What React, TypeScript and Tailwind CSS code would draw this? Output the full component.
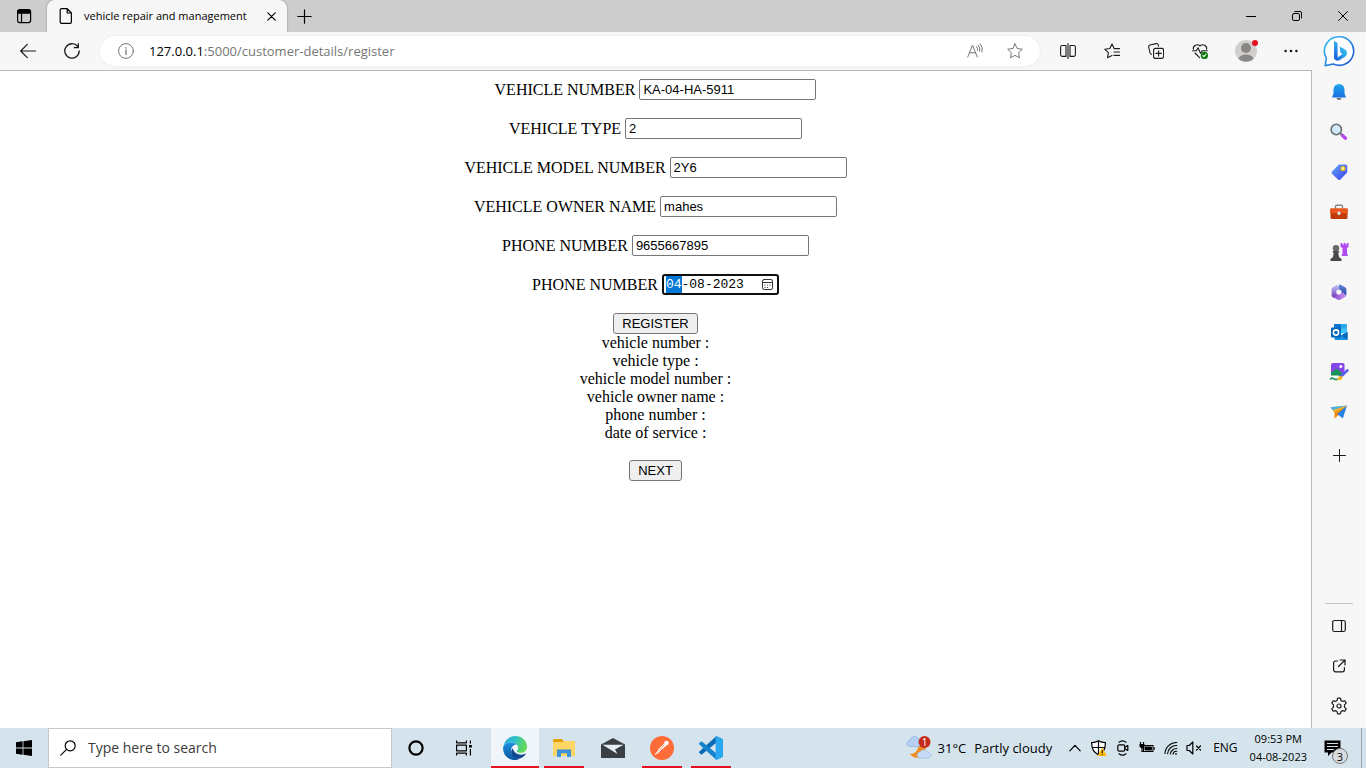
import { useEffect, useRef } from "react";
import type { ReactNode } from "react";

/* ---------- small line icon wrapper ---------- */

function Line({ children, size = 16, w = 1 }: { children: ReactNode; size?: number; w?: number }) {
  return (
    <svg
      width={size}
      height={size}
      viewBox={`0 0 ${size} ${size}`}
      fill="none"
      stroke="currentColor"
      strokeWidth={w}
      strokeLinecap="round"
      strokeLinejoin="round"
      aria-hidden="true"
    >
      {children}
    </svg>
  );
}

function IconButton({ label, className, children }: { label: string; className: string; children: ReactNode }) {
  return (
    <button type="button" aria-label={label} className={`flex shrink-0 items-center justify-center ${className}`}>
      {children}
    </button>
  );
}

/* ---------- window title bar ---------- */

function TabStrip() {
  return (
    <header className="flex h-8 bg-[#cdcdcd] text-black">
      <IconButton label="Tab actions menu" className="w-[47px]">
        <Line w={1.2}>
          <rect x="1.6" y="1.6" width="13" height="13" rx="2" />
          <path d="M2 2.5h12.4v2.6H2z" fill="currentColor" />
          <path d="M5.5 5v9.5" />
        </Line>
      </IconButton>
      <div className="flex w-60 items-center rounded-t-lg bg-[#f7f7f7] pl-3 pr-2 shadow-[0_0_2px_rgba(0,0,0,0.4)]">
        <svg width="14" height="16" viewBox="0 0 14 16" fill="none" stroke="currentColor" strokeWidth="1.2" strokeLinejoin="round" aria-hidden="true">
          <path d="M8.2.7H2.5A1.3 1.3 0 0 0 1.2 2v12a1.3 1.3 0 0 0 1.3 1.3h8.600A1.300 1.300 0 0 0 12.400 14V5zM8.200.7V5h4.200" />
        </svg>
        <span className="ml-[11px] flex-1 whitespace-nowrap text-[11px] leading-4">vehicle repair and management</span>
        <IconButton label="Close tab" className="h-4 w-4">
          <Line size={9} w={1.2}>
            <path d="M.8.8l7.400 7.400M8.200.8L.8 8.200" />
          </Line>
        </IconButton>
      </div>
      <IconButton label="New tab" className="w-[35px]">
        <Line size={15} w={1.2}>
          <path d="M7.5.8v13.4M.8 7.5h13.4" />
        </Line>
      </IconButton>
      <div className="flex-1" />
      <IconButton label="Minimize" className="w-[46px]">
        <Line size={10}>
          <path d="M0 5.5h10" />
        </Line>
      </IconButton>
      <IconButton label="Restore" className="w-[46px]">
        <Line size={10}>
          <rect x=".5" y="2.5" width="7" height="7" rx="1.4" />
          <path d="M2.8.5H8A1.6 1.6 0 0 1 9.6 2v5" />
        </Line>
      </IconButton>
      <IconButton label="Close" className="w-[46px]">
        <Line size={10}>
          <path d="M.5.5l9 9M9.500.5l-9 9" />
        </Line>
      </IconButton>
    </header>
  );
}

/* ---------- address bar ---------- */

function BingLogo() {
  return (
    <svg width="32" height="32" viewBox="0 0 32 32" aria-hidden="true">
      <defs>
        <linearGradient id="bingRing" x1="0" y1="0" x2="1" y2="1">
          <stop offset="0" stopColor="#35c3f3" />
          <stop offset="1" stopColor="#1b4fd0" />
        </linearGradient>
        <linearGradient id="bingStem" x1="0" y1="0" x2="0" y2="1">
          <stop offset="0" stopColor="#35b4f2" />
          <stop offset="1" stopColor="#1b5fe0" />
        </linearGradient>
        <linearGradient id="bingB" x1="0" y1="1" x2="1" y2="0">
          <stop offset="0" stopColor="#1b5fe0" />
          <stop offset="1" stopColor="#36d0ef" />
        </linearGradient>
      </defs>
      <path d="M16 1.7A14.3 14.3 0 1 1 10.4 29l-8.2 1.6 1.2-7.4A14.3 14.3 0 0 1 16 1.7z" fill="#fff" stroke="url(#bingRing)" strokeWidth="1.6" strokeLinejoin="round" />
      <path d="M16.500 11.500l5.200 2.800c2.800 1.700 3 5.300.7 7.200l-6 3.700c-2.500 1.200-5.400-.2-5.400-3.200l3.500.5 5-3.500-2-1.500z" fill="url(#bingB)" />
      <path d="M11 6l2.600 1.200c.7.400 1 .9 1 1.700V22c0 1.500-1.200 2.300-2.300 2-.9-.3-1.300-1-1.300-2z" fill="url(#bingStem)" />
    </svg>
  );
}

function AddressBar() {
  return (
    <nav aria-label="Browser toolbar" className="flex h-[38px] items-center bg-[#f7f7f7] pl-1.5 text-[#1b1b1b]">
      <IconButton label="Back" className="h-8 w-11">
        <Line w={1.2}>
          <path d="M15.5 8H.8M7.3 1.4L.7 8l6.6 6.6" />
        </Line>
      </IconButton>
      <IconButton label="Refresh" className="h-8 w-11">
        <Line w={1.3}>
          <path d="M15.2 8A7.2 7.2 0 1 1 13.6 3.4M14.3.7v4h-4" />
        </Line>
      </IconButton>
      <div className="mx-1.5 flex h-[30px] flex-1 items-center rounded-full bg-white pl-[18px] pr-[17px] text-[#767676] shadow-[0_0_3px_rgba(0,0,0,0.08)]">
        <Line w={1}>
          <circle cx="8" cy="8" r="7.4" />
          <path d="M8 7v4.6M8 4.6v.4" strokeWidth="1.3" />
        </Line>
        <a href="#register" className="ml-[15px] flex-1 whitespace-nowrap text-[13px] leading-5">
          <span className="text-black">127.0.0.1</span>:5000/customer-details/register
        </a>
        <IconButton label="Read aloud" className="mr-6 h-6 w-4">
          <Line>
            <path d="M.7 14L5.500 2.200 10.300 14M2.400 9.800h6.200M9.500 3.600a4 4 0 0 1 1 3.800M11.300 2.200a6 6 0 0 1 1.400 6M13.200.9a8 8 0 0 1 1.800 8" />
          </Line>
        </IconButton>
        <IconButton label="Add to favorites" className="h-6 w-4">
          <Line>
            <path d="M8 .9l2.2 4.6 5.1.7-3.7 3.5.9 5.1L8 12.4l-4.5 2.4.9-5.1L.7 6.2l5.1-.7z" />
          </Line>
        </IconButton>
      </div>
      <IconButton label="Split screen" className="h-8 w-11">
        <Line w={1.1}>
          <path d="M6 2.5H2.2A1.6 1.6 0 0 0 .6 4v7.8a1.6 1.6 0 0 0 1.6 1.6H6zM10 2.5h3.8A1.6 1.6 0 0 1 15.4 4v7.8a1.6 1.6 0 0 1-1.6 1.6H10zM8 .6v14.8" />
        </Line>
      </IconButton>
      <IconButton label="Favorites" className="h-8 w-11">
        <Line w={1.1}>
          <path d="M10.2 5.6L8 .9 5.8 5.5l-5.1.7 3.7 3.5-.9 5.1L8 12.6M10 5.6h5.5M10 9h5.5M10 12.4h5.5" />
        </Line>
      </IconButton>
      <IconButton label="Collections" className="h-8 w-11">
        <Line w={1.1}>
          <rect x="5.6" y="5.4" width="10" height="10" rx="2" />
          <path d="M10.6 7.7v5.4M7.9 10.4h5.4M3.5 11.4A1.8 1.8 0 0 1 2 10L.7 4A1.8 1.8 0 0 1 2 2l6-1.4A1.8 1.8 0 0 1 10.2 2l.4 1.3" />
        </Line>
      </IconButton>
      <IconButton label="Browser essentials" className="h-8 w-11">
        <Line w={1.1}>
          <path d="M1.3 6.2A3.9 3.9 0 0 1 8 3a3.9 3.9 0 0 1 6.7 3.2M.6 7.8h3.8l1.6-3 2.5 5.4L10.3 7.8h5M3 10l4.6 4.6" />
          <circle cx="12.4" cy="12.4" r="3.6" fill="#107c10" stroke="none" />
          <path d="M10.8 12.6l1.1 1 2-2.2" stroke="#fff" />
        </Line>
      </IconButton>
      <IconButton label="Profile" className="h-8 w-12">
        <svg width="24" height="24" viewBox="0 0 24 24" aria-hidden="true">
          <circle cx="12" cy="12" r="11" fill="#d2d0ce" />
          <circle cx="12" cy="9" r="5" fill="#8a8886" />
          <path d="M4.600 20c.8-6 14-6 14.800 0A11 11 0 0 1 4.600 20z" fill="#8a8886" />
          <circle cx="21" cy="4" r="3" fill="#e81123" />
        </svg>
      </IconButton>
      <IconButton label="Settings and more" className="h-8 w-[42px]">
        <svg width="14" height="4" viewBox="0 0 14 4" fill="currentColor" aria-hidden="true">
          <circle cx="1.6" cy="2" r="1.3" />
          <circle cx="7" cy="2" r="1.3" />
          <circle cx="12.4" cy="2" r="1.3" />
        </svg>
      </IconButton>
      <IconButton label="Discover" className="h-8 w-[54px]">
        <BingLogo />
      </IconButton>
    </nav>
  );
}

/* ---------- registration page ---------- */

const fields = [
  { id: "vehicle-number", label: "VEHICLE NUMBER", value: "KA-04-HA-5911" },
  { id: "vehicle-type", label: "VEHICLE TYPE", value: "2" },
  { id: "vehicle-model", label: "VEHICLE MODEL NUMBER", value: "2Y6" },
  { id: "owner-name", label: "VEHICLE OWNER NAME", value: "mahes" },
  { id: "phone-number", label: "PHONE NUMBER", value: "9655667895" },
];

const summary = ["vehicle number :", "vehicle type :", "vehicle model number :", "vehicle owner name :", "phone number :", "date of service :"];

const formButton = "h-[21px] rounded-[3px] border border-[#767676] bg-[#efefef] px-2 font-['Liberation_Sans',Arial,sans-serif] text-[13px] leading-4";

function RegisterPage() {
  const dateRef = useRef<HTMLInputElement>(null);

  useEffect(() => {
    dateRef.current?.focus();
    dateRef.current?.setSelectionRange(0, 2);
  }, []);

  return (
    <main className="flex-1 border-r border-t border-[#b9b9b9] bg-white p-2 font-['Liberation_Serif','Times_New_Roman',serif] text-[16px] leading-[18px] text-black">
      <form className="flex flex-col items-center" onSubmit={(e) => e.preventDefault()}>
        {fields.map((f) => (
          <div key={f.id} className="mb-[18px] flex h-[21px] items-center gap-1">
            <label htmlFor={f.id}>{f.label}</label>
            <input
              id={f.id}
              defaultValue={f.value}
              className="h-[21px] w-[177px] rounded-[2px] border border-[#767676] bg-white px-[3px] font-['Liberation_Sans',Arial,sans-serif] text-[13px] leading-4"
            />
          </div>
        ))}
        <div className="mb-[18px] flex h-[21px] items-center gap-1">
          <label htmlFor="service-date">PHONE NUMBER</label>
          <div className="flex h-[21px] w-[117px] items-center rounded-[3px] border-2 border-[#101010] bg-white pl-0.5 pr-[3px]">
            <input
              id="service-date"
              ref={dateRef}
              defaultValue="04-08-2023"
              className="h-[17px] w-0 flex-1 font-['Liberation_Mono','Courier_New',monospace] text-[13px] leading-[17px] caret-transparent outline-none selection:bg-[#0078d7] selection:text-white"
            />
            <button type="button" aria-label="Open calendar" className="text-[#333]">
              <Line size={13}>
                <rect x="1.5" y="1.5" width="10" height="10" rx="1.6" />
                <path d="M1.5 4.5h10" />
                <path d="M4 7h.1M6.500 7h.1M9 7h.1M4 9.500h.1M6.500 9.500h.1" strokeWidth="1.2" />
              </Line>
            </button>
          </div>
        </div>
        <button type="submit" className={formButton}>
          REGISTER
        </button>
        <div className="mb-[18px] text-center">
          {summary.map((s) => (
            <p key={s}>{s}</p>
          ))}
        </div>
        <button type="button" className={formButton}>
          NEXT
        </button>
      </form>
    </main>
  );
}

/* ---------- browser sidebar ---------- */

function Bell() {
  return (
    <svg width="18" height="18" viewBox="0 0 18 18">
      <defs>
        <linearGradient id="bell" x1="0" y1="0" x2="0" y2="1">
          <stop offset="0" stopColor="#1fa5ee" />
          <stop offset="1" stopColor="#1a6fe0" />
        </linearGradient>
      </defs>
      <path d="M6.5 15h5a2.5 2 0 0 1-5 0z" fill="#707070" />
      <path d="M9 1a5.5 5.5 0 0 1 5.5 5.5v4L16 14.5H2l1.5-4v-4A5.5 5.5 0 0 1 9 1z" fill="url(#bell)" />
    </svg>
  );
}

function Search() {
  return (
    <svg width="18" height="18" viewBox="0 0 18 18">
      <path d="M12.200 12.200l3.300 3" stroke="#b544ee" strokeWidth="3.2" strokeLinecap="round" />
      <path d="M10.2 10.2l1.800 1.800" stroke="#777" strokeWidth="1.8" />
      <circle cx="6.3" cy="6.500" r="5.200" fill="#cfeafb" stroke="#6b6f75" strokeWidth="1.6" />
    </svg>
  );
}

function Tag() {
  return (
    <svg width="18" height="18" viewBox="0 0 18 18">
      <defs>
        <linearGradient id="tag" x1="0" y1="0" x2="1" y2="1">
          <stop offset="0" stopColor="#5fa8fb" />
          <stop offset="1" stopColor="#3f3fee" />
        </linearGradient>
      </defs>
      <path d="M9.6 1.5h6a1.6 1.6 0 0 1 1.6 1.6v5.6c0 .5-.2.9-.5 1.2l-6.3 6.5c-.6.7-1.6.7-2.3 0l-6-5.5c-.7-.6-.7-1.6 0-2.3l6.3-6.6c.3-.3.7-.5 1.2-.5z" fill="url(#tag)" />
      <circle cx="13" cy="5.500" r="2" fill="#fff3a8" stroke="#f5b800" strokeWidth="1.2" />
    </svg>
  );
}

function Toolbox() {
  return (
    <svg width="20" height="18" viewBox="0 0 20 18">
      <path d="M6.5 5.5V3.3c0-.7.5-1.1 1.1-1.1h4.8c.6 0 1.1.4 1.1 1.1v2.2" fill="none" stroke="#868686" strokeWidth="1.4" />
      <rect x="1.5" y="9" width="17" height="7" rx="1.2" fill="#c13b08" />
      <rect x="1" y="5.2" width="18" height="5" rx="1.2" fill="#e8561b" />
      <rect x="8.5" y="8.6" width="3" height="3.4" rx="1" fill="#d9e2ea" />
    </svg>
  );
}

function Chess() {
  return (
    <svg width="20" height="20" viewBox="0 0 20 20">
      <path d="M11.5 1h1.8v1.500h1.400V1h1.800v1.500h1.400V1h1.600v4L18 6v5l1 3h-6.400l.9-3V6l-2-1z" fill="#b04cf2" />
      <circle cx="7" cy="6.2" r="3.2" fill="#6a6a6a" />
      <path d="M3.800 9h6.400v1.500H9.200l.8 4.500 2.500 2v2h-11v-2L4 15l.8-4.500h-1z" fill="#4a4a4a" />
    </svg>
  );
}

function M365() {
  return (
    <svg width="18" height="18" viewBox="0 0 18 18" fill="none" strokeWidth="4.800" strokeLinejoin="round">
      <defs>
        <linearGradient id="m365Left" x1="0" y1="0" x2="0" y2="1">
          <stop offset="0" stopColor="#b3b6f2" />
          <stop offset="1" stopColor="#7a45bd" />
        </linearGradient>
        <linearGradient id="m365Right" x1="0" y1="0" x2="0" y2="1">
          <stop offset="0" stopColor="#5b7fd4" />
          <stop offset="1" stopColor="#243f9f" />
        </linearGradient>
        <linearGradient id="m365Low" x1="0" y1="0" x2="1" y2="0">
          <stop offset="0" stopColor="#8c55cf" />
          <stop offset="1" stopColor="#c98bf0" />
        </linearGradient>
      </defs>
      <path d="M8.500 3.300l5.500 3v6" stroke="url(#m365Right)" />
      <path d="M14.800 11.400L9 14.700l-4-2.200" stroke="url(#m365Low)" />
      <path d="M5.200 13.200L4 12V6.200l4.300-2.500" stroke="url(#m365Left)" />
    </svg>
  );
}

function Outlook() {
  return (
    <svg width="18" height="18" viewBox="0 0 18 18">
      <rect x="4" y="1" width="13" height="9" rx="1" fill="#28a8ea" />
      <path d="M4 1h7v5H4z" fill="#0f78d4" />
      <path d="M11 5.500h6v5h-6z" fill="#40c4ff" />
      <path d="M4.5 9l6 3.500L17.500 9v7a1 1 0 0 1-1 1h-11a1 1 0 0 1-1-1z" fill="#1490df" />
      <path d="M17.500 9v8l-6-4.500z" fill="#0a64b8" />
      <rect x="1" y="4.500" width="10" height="10" rx="1" fill="#0364b8" />
      <circle cx="6" cy="9.500" r="2.600" fill="none" stroke="#fff" strokeWidth="1.6" />
    </svg>
  );
}

function Designer() {
  return (
    <svg width="20" height="20" viewBox="0 0 20 20">
      <rect x="2" y="1" width="13.500" height="13" rx="1.8" fill="#8547e8" />
      <path d="M2 11l4.500-3.700c.7-.5 1.300-.5 2 0L14 12v2H2z" fill="#16945a" />
      <circle cx="11.8" cy="4.600" r="1.500" fill="#fff" />
      <path d="M.5 13.500H10V19H.5z" fill="#f7f7f7" />
      <path d="M1.500 17c2.500-3 3 1.800 6.500.2" fill="none" stroke="#16945a" strokeWidth="1.600" strokeLinecap="round" />
      <path d="M18.300 8.500l-6.300 5.800" stroke="#5b62e8" strokeWidth="2.800" strokeLinecap="round" />
      <path d="M13.500 14.500c.4 2.800-2 4.300-5.500 3.700 1.200-1 1-3.500 3-4.200z" fill="#f6b21b" />
    </svg>
  );
}

function Drop() {
  return (
    <svg width="20" height="18" viewBox="0 0 20 18">
      <path d="M18 2.500L5.500 9.500v6L9 12.500z" fill="#f08a00" />
      <path d="M1.500 4.200L18 2.500 5.500 9.800z" fill="#f3ae2a" />
      <path d="M1.500 4.200L18 2.500 3.600 7z" fill="#42b2ee" />
      <path d="M18 2.500L13.800 15.500 8.200 11z" fill="#2583e8" />
    </svg>
  );
}

const sidebarApps = [
  { label: "Notifications", icon: <Bell /> },
  { label: "Search", icon: <Search /> },
  { label: "Shopping", icon: <Tag /> },
  { label: "Tools", icon: <Toolbox /> },
  { label: "Games", icon: <Chess /> },
  { label: "Microsoft 365", icon: <M365 /> },
  { label: "Outlook", icon: <Outlook /> },
  { label: "Image creator", icon: <Designer /> },
  { label: "Drop", icon: <Drop /> },
];

function Sidebar() {
  return (
    <aside className="flex w-[54px] shrink-0 flex-col items-center bg-[#f7f7f7] pt-0.5 text-[#1b1b1b]">
      {sidebarApps.map((app) => (
        <IconButton key={app.label} label={app.label} className="h-10 w-10">
          {app.icon}
        </IconButton>
      ))}
      <IconButton label="Customize" className="mt-[3px] h-10 w-10">
        <Line size={13}>
          <path d="M6.5.5v12M.5 6.5h12" />
        </Line>
      </IconButton>
      <div className="flex-1" />
      <hr className="mb-0.5 w-7 border-[#c2c2c2]" />
      <IconButton label="Hide sidebar" className="h-10 w-10">
        <Line size={14} w={1.2}>
          <rect x=".7" y="1.5" width="12.6" height="11" rx="1.8" />
          <path d="M9.5 1.5v11" />
        </Line>
      </IconButton>
      <IconButton label="Open link" className="h-10 w-10">
        <Line size={14} w={1.2}>
          <path d="M5.5 2H3.6A2 2 0 0 0 1.6 4v6.8a2 2 0 0 0 2 2h6.8a2 2 0 0 0 2-2V8.5M8 1h5v5M13 1L6.5 7.5" />
        </Line>
      </IconButton>
      <IconButton label="Settings" className="mb-0.5 h-10 w-10">
        <Line size={18} w={1.2}>
          <circle cx="9" cy="9" r="2" />
          <path d="M7.6 1.2h2.8l.6 2.3 1.5.9 2.3-.7 1.4 2.4-1.7 1.7v2.4l1.7 1.7-1.4 2.4-2.3-.7-1.5.9-.6 2.3H7.6L7 14.5l-1.5-.9-2.3.7-1.4-2.4 1.7-1.7V7.8L1.8 6.1l1.4-2.4 2.3.7L7 3.5z" />
        </Line>
      </IconButton>
    </aside>
  );
}

/* ---------- taskbar ---------- */

function EdgeLogo() {
  return (
    <svg width="24" height="24" viewBox="0 0 24 24" aria-hidden="true">
      <defs>
        <linearGradient id="edgeTop" x1="0" y1="0" x2="1" y2=".3">
          <stop offset="0" stopColor="#28a9e0" />
          <stop offset=".5" stopColor="#2fc2c9" />
          <stop offset="1" stopColor="#62d957" />
        </linearGradient>
        <linearGradient id="edgeLow" x1="0" y1="0" x2="0" y2="1">
          <stop offset="0" stopColor="#1b8fdc" />
          <stop offset="1" stopColor="#0c59a4" />
        </linearGradient>
      </defs>
      <path d="M.3 11C1.2 4.5 6 0 12 0c7 0 12 5 12 10.5 0 4-3 6.3-6.3 6.3-3 0-4.3-1-3.8-2 1-1.3 1.3-2 1.2-3.3C14.8 8.5 12 6.5 8.6 6.5 4.5 6.5 1.5 8.5.3 11z" fill="url(#edgeTop)" />
      <path d="M.2 11C1.5 8.3 4.8 6.500 8.600 6.500c2.200 0 4 .7 5.200 2C10.500 8.500 8 11.200 8 14.500c0 4.500 4 8 8.700 8-1.500 1-3.200 1.500-4.700 1.500C5 24-.6 18.500.2 11z" fill="url(#edgeLow)" />
      <path d="M9.500 12c-3.500 5 .5 11 6 10.800 3-.3 5.500-2 7-4.500.3-.5-.1-.9-.6-.6-4.400 2.100-10.500.8-12.400-5.700z" fill="#11478c" />
    </svg>
  );
}

function FolderLogo() {
  return (
    <svg width="22" height="20" viewBox="0 0 22 20" aria-hidden="true">
      <path d="M0 2.5L1 1h8l1.500 2H22v4H0z" fill="#e0a100" />
      <rect y="4" width="22" height="14" rx=".6" fill="#ffd563" />
      <path d="M10.500 3H21.300v3H10.500z" fill="#ffd563" />
      <path d="M4 19v-7.500h14V19h-4v-3.800H8V19z" fill="#3d90d7" />
    </svg>
  );
}

function MailLogo() {
  return (
    <svg width="24" height="20" viewBox="0 0 24 20" aria-hidden="true">
      <path d="M0 6.5L12 0l12 6.5V20H0z" fill="#3b4045" />
      <path d="M1.5 6.8h21L14 11.500l2.500 4.500z" fill="#e5eef3" />
    </svg>
  );
}

function PostmanLogo() {
  return (
    <svg width="24" height="24" viewBox="0 0 24 24" aria-hidden="true">
      <circle cx="12" cy="12" r="12" fill="#ff6c37" />
      <path d="M14.2 7.3l2.3 2.3-6.8 6-2-1.600z" fill="#fff" />
      <path d="M8.3 14.500L5 18.800l4.700-3.200z" fill="#fff" stroke="#fff" strokeWidth=".6" />
      <circle cx="16.5" cy="7" r="2.3" fill="#fff" />
      <path d="M14.3 8.500L9.500 14.600" stroke="#ff6c37" strokeWidth=".7" />
    </svg>
  );
}

function CodeLogo() {
  return (
    <svg width="24" height="24" viewBox="0 0 24 24" aria-hidden="true">
      <path d="M17.5 0v6.5L3.2 18.3c-.5.4-1 .4-1.4 0L.4 17c-.5-.5-.5-1.1 0-1.5z" fill="#0a6bb5" />
      <path d="M17.5 24v-6.5L3.2 5.7c-.5-.4-1-.4-1.4 0L.4 7c-.5.5-.5 1.1 0 1.5z" fill="#1584cc" />
      <path d="M17.5 0L24 3v18l-6.5 3c-.6 0-.9-.4-.9-1V1c0-.6.3-1 .9-1z" fill="#2aa7f0" />
    </svg>
  );
}

const pinned = [
  { label: "File Explorer", icon: <FolderLogo />, running: true },
  { label: "Mail", icon: <MailLogo />, running: false },
  { label: "Postman", icon: <PostmanLogo />, running: true },
  { label: "Visual Studio Code", icon: <CodeLogo />, running: true },
];

function WeatherIcon() {
  return (
    <svg width="26" height="24" viewBox="0 0 26 24" aria-hidden="true">
      <path d="M13 5a8.5 8.5 0 1 1-9 13c4.5.5 9-3 9-13z" fill="#f28a1c" />
      <path d="M4 10.5a3 3 0 0 1 0-6A4.5 4.5 0 0 1 12.5 3c3 0 4 2.200 4 4 0 2-1.500 3.500-3.500 3.500z" fill="#b5d0f5" stroke="#7fa6dd" strokeWidth=".6" />
      <path d="M14 22a3 3 0 0 1 .3-6c1-2.800 5.700-3.200 7 .2 4.700.3 4.500 5.800.7 5.800z" fill="#c6dbf8" stroke="#8fb2e6" strokeWidth=".6" />
      <circle cx="18.5" cy="6" r="6" fill="#c42b1c" />
      <text x="18.5" y="9.5" textAnchor="middle" fontSize="10" fill="#fff">
        1
      </text>
    </svg>
  );
}

function Taskbar() {
  return (
    <footer className="flex h-10 bg-[#d5e4ec] text-black">
      <IconButton label="Start" className="w-12">
        <svg width="16" height="16" viewBox="0 0 16 16" aria-hidden="true">
          <path d="M0 2.2L6.6 1.3v6.3H0zM7.4 1.2L16 0v7.6H7.4zM0 8.4h6.6v6.3L0 13.8zM7.4 8.4H16V16l-8.6-1.2z" />
        </svg>
      </IconButton>
      <label className="flex w-[344px] items-center border border-[#c6c9cb] bg-white pl-[11px]">
        <Line size={16} w={1.2}>
          <circle cx="10.2" cy="5.8" r="5" />
          <path d="M6.6 9.4L.8 15.2" />
        </Line>
        <input aria-label="Search Windows" placeholder="Type here to search" className="ml-3 w-0 flex-1 text-[14px] leading-5 outline-none placeholder:text-[#3b3b3b] placeholder:opacity-100" />
      </label>
      <IconButton label="Cortana" className="w-12">
        <Line w={2.2}>
          <circle cx="8" cy="8" r="6.6" />
        </Line>
      </IconButton>
      <IconButton label="Task view" className="mr-[3px] w-12">
        <Line w={1.2}>
          <path d="M.6.5v2.300h9.800V.5M.6 15.500v-2.300h9.800v2.300M.6 5.200h9.800v5.600H.6zM14.400.5v3M14.400 9v6.500" strokeLinecap="butt" />
          <path d="M13 5h2.800v2.600H13z" fill="currentColor" stroke="none" />
        </Line>
      </IconButton>
      <IconButton label="Microsoft Edge" className="w-12 border-b-2 border-[#e81123] bg-[#eff5f8] pt-0.5">
        <EdgeLogo />
      </IconButton>
      {pinned.map((app) => (
        <IconButton key={app.label} label={app.label} className="ml-px w-12">
          <span className={`flex h-full w-10 items-center justify-center border-b-2 pt-0.5 ${app.running ? "border-[#e81123]" : "border-transparent"}`}>{app.icon}</span>
        </IconButton>
      ))}
      <div className="flex-1" />
      <button type="button" className="flex items-center whitespace-nowrap text-[13px] leading-5">
        <WeatherIcon />
        <span className="ml-1.5">31°C</span>
        <span className="ml-2">Partly cloudy</span>
      </button>
      <IconButton label="Show hidden icons" className="ml-[11px] w-6">
        <Line size={12} w={1.2}>
          <path d="M.8 8.8L6 3.4l5.200 5.400" />
        </Line>
      </IconButton>
      <IconButton label="Windows Security" className="w-6">
        <svg width="16" height="16" viewBox="0 0 16 16" aria-hidden="true">
          <path d="M7.5.7C9.5 2 11.7 2.600 14.300 2.600c.3 6-1.700 10-6.800 12.300C2.500 12.600.5 8.600.7 2.600 3.300 2.600 5.500 2 7.500.7z" fill="#fff" stroke="#000" strokeWidth="1.2" />
          <path d="M7.5.7v14.200M1 7.500h13" stroke="#000" strokeWidth="1.2" />
          <path d="M11.200 7.500L16 16H6.500z" fill="#fbbc12" />
          <path d="M11.200 10.200v3M11.200 14.200v1" stroke="#000" />
        </svg>
      </IconButton>
      <IconButton label="Meet Now" className="w-6">
        <Line w={1.2}>
          <rect x="2.8" y="4.8" width="7" height="6.4" rx="1.5" />
          <path d="M9.8 7.3l3-1.800v5l-3-1.800M4 2.200C6 .6 9 .6 11 2.200M4 13.800c2 1.600 5 1.600 7 0" />
        </Line>
      </IconButton>
      <IconButton label="Battery" className="w-6">
        <svg width="16" height="16" viewBox="0 0 16 16" fill="none" stroke="#000" aria-hidden="true">
          <rect x="4.5" y="5.5" width="9.500" height="6" />
          <path d="M6 7h6.500v3H6z" fill="#000" />
          <path d="M15.2 7.3v2.400M1.500 2v2.500M4.500 2v2.500M3 8v3.500h1.500" strokeWidth="1.2" />
          <path d="M.5 4h5v2.500L4 8H2L.5 6.500z" fill="#000" stroke="none" />
        </svg>
      </IconButton>
      <IconButton label="Network" className="w-6">
        <Line size={14} w={1.1}>
          <path d="M1 12.5A11.500 11.500 0 0 1 12.800 1.500M3.600 12.800A8.800 8.800 0 0 1 12.800 4.500M6.300 13A6.200 6.200 0 0 1 12.800 7.500M9 13.200a3.500 3.500 0 0 1 3.800-2.900" />
          <circle cx="12" cy="12.8" r=".9" fill="currentColor" stroke="none" />
        </Line>
      </IconButton>
      <IconButton label="Volume muted" className="w-[22px]">
        <Line w={1.2}>
          <path d="M1 5.5h2.300L6.800 2v12L3.300 10.500H1zM10.500 6l4 4M14.500 6l-4 4" />
        </Line>
      </IconButton>
      <button type="button" className="ml-2 text-[12px] leading-4">
        ENG
      </button>
      <button type="button" className="ml-3 flex flex-col items-center justify-center whitespace-nowrap text-[11px] leading-[18px]">
        <span>09:53 PM</span>
        <span>04-08-2023</span>
      </button>
      <button type="button" aria-label="Notifications" className="relative ml-[17px] flex w-[37px] items-center">
        <svg width="17" height="17" viewBox="0 0 17 17" aria-hidden="true">
          <path d="M.5.5h16v12H7.500L4 16v-3.500H.5z" />
          <path d="M3 3.500h11M3 6.500h11M3 9.500h7" stroke="#d5e4ec" />
        </svg>
        <span className="absolute bottom-1 left-2 flex h-4 w-4 items-center justify-center rounded-full border border-[#777] bg-[#d9dcde] text-[11px] leading-none">3</span>
      </button>
      <button type="button" aria-label="Show desktop" className="w-[5px] border-l border-[#9aa7ae]" />
    </footer>
  );
}

export default function App() {
  return (
    <div className="flex min-h-screen flex-col bg-[#f7f7f7] font-['Open_Sans','Noto_Sans',sans-serif]">
      <TabStrip />
      <AddressBar />
      <div className="flex flex-1">
        <RegisterPage />
        <Sidebar />
      </div>
      <Taskbar />
    </div>
  );
}
